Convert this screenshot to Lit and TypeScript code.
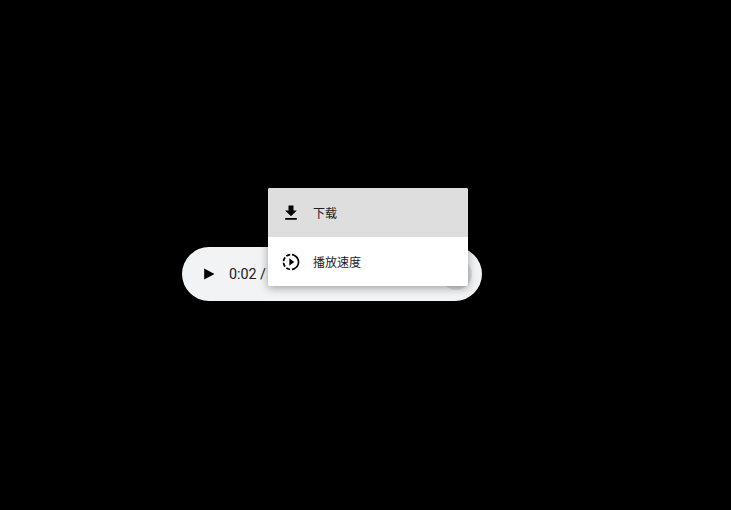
import { LitElement, html, css } from "lit";
import { customElement } from "lit/decorators.js";

@customElement("app-root")
export class AppRoot extends LitElement {
  static styles = css`
    :host {
      display: block;
      width: 731px;
      height: 510px;
      background: #000;
      padding: 247px 0 0 182px;
      box-sizing: border-box;
      font-family: "Roboto", "Noto Sans CJK SC", sans-serif;
      overflow: hidden;
    }
    .player {
      position: relative;
      width: 300px;
      height: 54px;
      background: #f1f3f4;
      border-radius: 27px;
      display: flex;
      align-items: center;
      padding: 0 10px 0 11px;
      box-sizing: border-box;
      color: #000;
    }
    .play {
      width: 32px;
      height: 32px;
      display: flex;
      align-items: center;
      justify-content: center;
      flex: none;
    }
    .time {
      margin-left: 4px;
      font-size: 14.3px;
      white-space: nowrap;
      color: #1a1a1a;
    }
    .more {
      margin-left: auto;
      width: 32px;
      height: 32px;
      border-radius: 50%;
      background: rgba(0, 0, 0, 0.1);
      flex: none;
    }
    .menu {
      position: absolute;
      left: 86px;
      top: -59px;
      width: 200px;
      background: #fff;
      border-radius: 2px;
      box-shadow: 0 2px 8px rgba(0, 0, 0, 0.35);
      overflow: hidden;
    }
    .item {
      height: 49px;
      display: flex;
      align-items: center;
      padding-left: 13px;
      gap: 12px;
      font-size: 12px;
      color: #202124;
    }
    .item.active {
      background: #dedede;
    }
    .item svg {
      width: 20px;
      height: 20px;
      flex: none;
      display: block;
    }
  `;

  render() {
    return html`
      <div class="player">
        <div class="play">
          <svg width="12" height="12" viewBox="0 0 12 12"><path d="M1.2 0.5 L11.5 6 L1.2 11.5 Z" fill="#000"></path></svg>
        </div>
        <span class="time">0:02 / 0:05</span>
        <div class="more"></div>
        <div class="menu">
          <div class="item active">
            <svg viewBox="0 0 24 24"><path d="M19 9h-4V3H9v6H5l7 7 7-7zM5 18v2h14v-2H5z" fill="#000"></path></svg>
            <span>下载</span>
          </div>
          <div class="item">
            <svg viewBox="0 0 24 24">
              <path d="M13.05 9.79L10 7.5v9l3.05-2.29L16 12zM11 4.07V2.05c-2.01.2-3.84 1-5.32 2.21L7.1 5.69A7.941 7.941 0 0111 4.07zM5.69 7.1L4.26 5.68A9.949 9.949 0 002.05 11h2.02c.18-1.46.76-2.79 1.62-3.9zM4.07 13H2.05c.2 2.01 1 3.84 2.21 5.32l1.43-1.43A7.868 7.868 0 014.07 13zm1.61 6.74A9.981 9.981 0 0011 21.95v-2.02a7.941 7.941 0 01-3.9-1.62l-1.42 1.43zM22 12c0 5.16-3.92 9.42-8.95 9.95v-2.02C16.97 19.41 20 16.05 20 12s-3.03-7.41-6.95-7.93V2.05C18.08 2.58 22 6.84 22 12z" fill="#000"></path>
            </svg>
            <span>播放速度</span>
          </div>
        </div>
      </div>
    `;
  }
}
